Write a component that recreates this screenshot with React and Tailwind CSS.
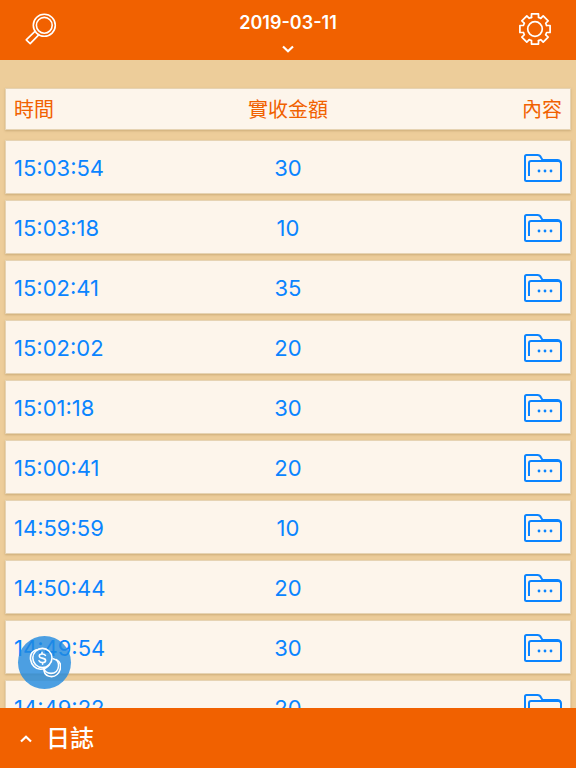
const records = [
    { time: '15:03:54', amount: 30 },
    { time: '15:03:18', amount: 10 },
    { time: '15:02:41', amount: 35 },
    { time: '15:02:02', amount: 20 },
    { time: '15:01:18', amount: 30 },
    { time: '15:00:41', amount: 20 },
    { time: '14:59:59', amount: 10 },
    { time: '14:50:44', amount: 20 },
    { time: '14:49:54', amount: 30 },
    { time: '14:49:22', amount: 20 },
];

function SearchIcon() {
    return (
        <svg width="32" height="32" viewBox="0 0 32 32" fill="none" stroke="currentColor" strokeWidth="1.6" aria-hidden="true">
            <circle cx="19.3" cy="12.3" r="11" />
            <circle cx="19.3" cy="12.3" r="7.9" />
            <path d="M10.2 18.2 1.2 26.8 5.2 30.6 14 21.6" strokeLinejoin="round" />
        </svg>
    );
}

// One tooth of the gear outline, repeated every 45 degrees
const gearTurns = [0, 45, 90, 135, 180, 225, 270, 315];

function GearIcon() {
    return (
        <svg width="32" height="32" viewBox="-16 -16 32 32" fill="none" stroke="currentColor" strokeWidth="1.7" strokeLinejoin="round" strokeLinecap="round" aria-hidden="true">
            <circle r="7.3" />
            {gearTurns.map((turn) => (
                <path
                    key={turn}
                    d="M-3.5-11.6V-15.1H3.5V-11.6L5.7-10.7"
                    transform={`rotate(${turn})`}
                />
            ))}
        </svg>
    );
}

function FolderIcon() {
    return (
        <svg width="38" height="28" viewBox="0 0 38 28" fill="none" stroke="currentColor" strokeWidth="2" strokeLinejoin="round" aria-hidden="true">
            <path d="M5 22V9Q5 7 7 7H34.5Q37 7 37 9.5V25.5Q37 27 35.5 27H2.5Q1 27 1 25.5V2.5Q1 1 2.5 1H13.5Q16 1 17 3.4L18.5 6" />
            <path d="M18 6H33.5Q36 6 36.4 8" />
            <g fill="currentColor" stroke="none">
                <circle cx="15" cy="17" r="1.4" />
                <circle cx="21" cy="17" r="1.4" />
                <circle cx="27" cy="17" r="1.4" />
            </g>
        </svg>
    );
}

function CoinsIcon() {
    return (
        <svg width="32" height="32" viewBox="0 0 32 32" fill="none" stroke="currentColor" strokeWidth="1.6" strokeLinecap="round" aria-hidden="true">
            <circle cx="13.4" cy="11" r="9.6" />
            <path d="M7.4 2.8C3 4.4 1 8.4 1.6 12.6 2.4 18 6.4 22 11.4 22.2 15 22.2 18.4 20.6 20.4 17.6" />
            <path d="M16.4 8.4Q15.4 6.9 13 7 10.2 7.2 10.3 9 10.4 10.8 13.2 11.1 16.6 11.6 16.6 13.6 16.4 15.6 13.6 15.6 10.8 15.6 10 13.8M13 5.2V7M13.6 15.6V17.2" />
            <path d="M24.2 11.8C27.6 12.4 29.8 15.4 29.6 19 29.2 23.4 26.2 26.4 22 26.4 18.4 26.2 15.8 24.4 15 21.6" />
            <path d="M27.4 12.6C31 14.6 32.2 18.4 31.2 22.2 30 26.4 26.6 29.6 22.6 29.6 18.4 29.4 15.6 27 15 23.6V21.6" />
        </svg>
    );
}

function Chevron({ up = false }) {
    return (
        <svg width="12" height="8" viewBox="0 0 12 8" fill="none" stroke="currentColor" strokeWidth="2.2" aria-hidden="true">
            <path d={up ? 'M1 6.5 6 1.7 11 6.5' : 'M1 1.5 6 6.3 11 1.5'} />
        </svg>
    );
}

export default function App() {
    return (
        <div className="relative flex h-screen flex-col overflow-hidden bg-[#edcd9a] font-['Inter','Noto_Sans_CJK_TC',sans-serif]">
            <header className="flex h-15 shrink-0 items-center justify-between bg-[#f16100] px-[25px] pb-0.5 text-white">
                <button type="button" aria-label="搜尋">
                    <SearchIcon />
                </button>
                <button type="button" className="flex flex-col items-center gap-3 pt-2">
                    <span className="text-lg leading-5 font-semibold">2019-03-11</span>
                    <Chevron />
                </button>
                <button type="button" aria-label="設定">
                    <GearIcon />
                </button>
            </header>

            <main className="min-h-0 flex-1 overflow-hidden px-[5px] pt-7">
                <table className="block">
                    <thead className="block text-xl text-[#f16100]">
                        <tr className="grid h-[42px] grid-cols-3 items-center border border-[#e6d3b3] bg-[#fdf5eb] px-2 pt-0.5 shadow-[0_1px_2px_#b8976299]">
                            <th className="text-left font-normal">時間</th>
                            <th className="text-center font-normal">實收金額</th>
                            <th className="text-right font-normal">內容</th>
                        </tr>
                    </thead>
                    <tbody className="mt-[10px] grid gap-[6px] text-[22px] text-[#0a84ff]">
                        {records.map(({ time, amount }) => (
                            <tr
                                key={time}
                                className="grid h-[54px] grid-cols-3 items-center border border-[#e6d3b3] bg-[#fdf5eb] px-2 pt-0.5 shadow-[0_1px_2px_#b8976299]"
                            >
                                <td>{time}</td>
                                <td className="text-center">{amount}</td>
                                <td className="flex justify-end">
                                    <button type="button" aria-label={`內容 ${time}`}>
                                        <FolderIcon />
                                    </button>
                                </td>
                            </tr>
                        ))}
                    </tbody>
                </table>
            </main>

            <button
                type="button"
                aria-label="收款"
                className="absolute bottom-[79px] left-[18px] flex size-[53px] items-center justify-center rounded-full bg-[#1f8ae0]/80 text-white"
            >
                <CoinsIcon />
            </button>

            <footer className="h-15 shrink-0 bg-[#f16100] px-5 text-white">
                <button type="button" className="flex h-full items-center gap-[14px] pt-0.5">
                    <Chevron up />
                    <span className="text-2xl font-medium">日誌</span>
                </button>
            </footer>
        </div>
    );
}
